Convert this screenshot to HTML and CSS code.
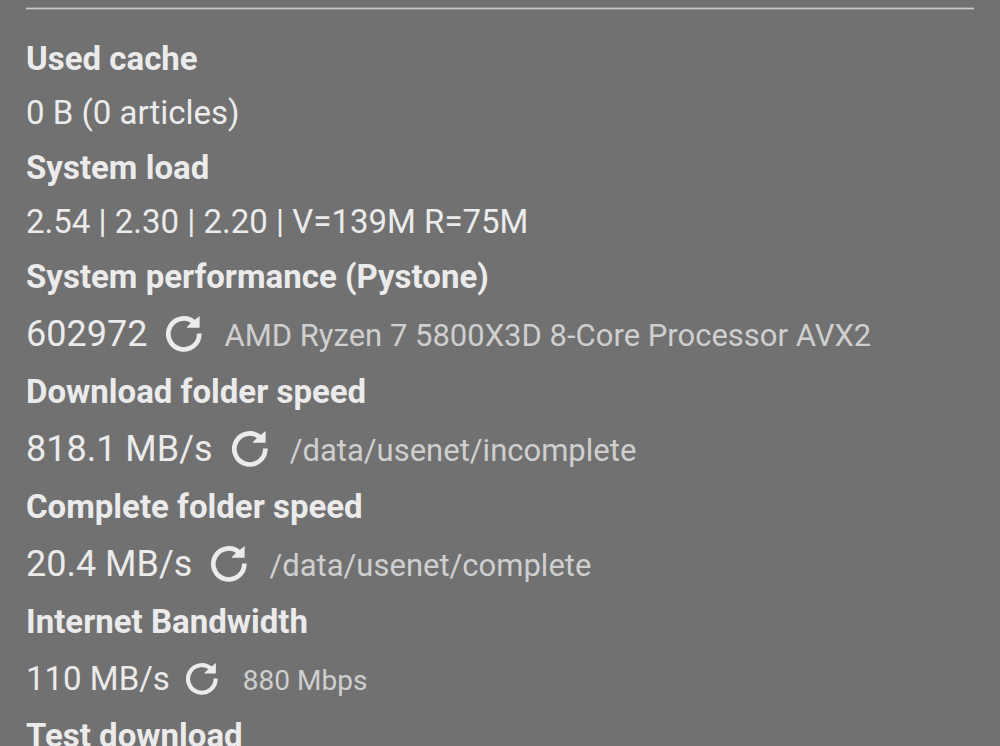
FILE: index.html
```html
<!DOCTYPE html>
<html lang="en">
<head>
<meta charset="utf-8">
<title>Status</title>
<link rel="stylesheet" href="styles.css">
</head>
<body>
<svg class="defs" aria-hidden="true"><symbol id="repeat" viewBox="0 0 36 36"><path d="M28.800 7A15.500 15.500 0 1 0 33.300 17.500" fill="none" stroke="currentColor" stroke-width="4.700"/><path d="M33.600 0v11.700H20.900v-.6l4-4z" fill="currentColor"/></symbol></svg>
<main class="status">
<hr class="rule">
<dl class="list">
<dt>Used cache</dt>
<dd>0 B (0 articles)</dd>
<dt>System load</dt>
<dd>2.54 | 2.30 | 2.20 | V=139M R=75M</dd>
<dt>System performance (Pystone)</dt>
<dd class="test">602972 <button class="refresh" type="button" aria-label="Repeat performance test"><svg><use href="#repeat"/></svg></button> <small>AMD Ryzen 7 5800X3D 8-Core Processor AVX2</small></dd>
<dt>Download folder speed</dt>
<dd class="test">818.1 MB/s <button class="refresh" type="button" aria-label="Repeat download folder test"><svg><use href="#repeat"/></svg></button> <small>/data/usenet/incomplete</small></dd>
<dt>Complete folder speed</dt>
<dd class="test">20.4 MB/s <button class="refresh" type="button" aria-label="Repeat complete folder test"><svg><use href="#repeat"/></svg></button> <small>/data/usenet/complete</small></dd>
<dt>Internet Bandwidth</dt>
<dd class="test compact">110 MB/s <button class="refresh" type="button" aria-label="Repeat bandwidth test"><svg><use href="#repeat"/></svg></button> <small>880 Mbps</small></dd>
<dt>Test download</dt>
</dl>
</main>
</body>
</html>
```
FILE: styles.css
```css
html {
  overflow: hidden;
}

body {
  margin: 0;
  background: #717171;
  color: #ebebeb;
  font-family: Roboto, sans-serif;
  font-size: 33px;
}

.defs {
  display: none;
}

.status {
  padding: 7px 26px 0;
}

.rule {
  height: 1px;
  margin: 0;
  border: solid #929292;
  border-width: 1px 0;
  background: #c8c8c8;
}

.list {
  margin: 21px 0 0;
}

.list dt,
.list dd {
  margin: 0;
  line-height: 54px;
}

.list dt {
  font-weight: 700;
  line-height: 55px;
}

.list .test {
  display: flex;
  align-items: baseline;
  font-size: 36px;
  line-height: 60px;
}

.refresh {
  display: block;
  align-self: center;
  width: 36px;
  height: 36px;
  margin: 0 22px 0 19px;
  padding: 0;
  border: 0;
  background: none;
  color: inherit;
}

.refresh svg {
  display: block;
  width: 100%;
  height: 100%;
}

.test small {
  color: #cfcfcf;
  font-size: 31px;
  line-height: 1;
}

.list .compact {
  font-size: 33px;
  line-height: 59px;
}

.compact .refresh {
  width: 32px;
  height: 32px;
  margin: 0 25px 0 16px;
}

.compact small {
  font-size: 28px;
}
```
